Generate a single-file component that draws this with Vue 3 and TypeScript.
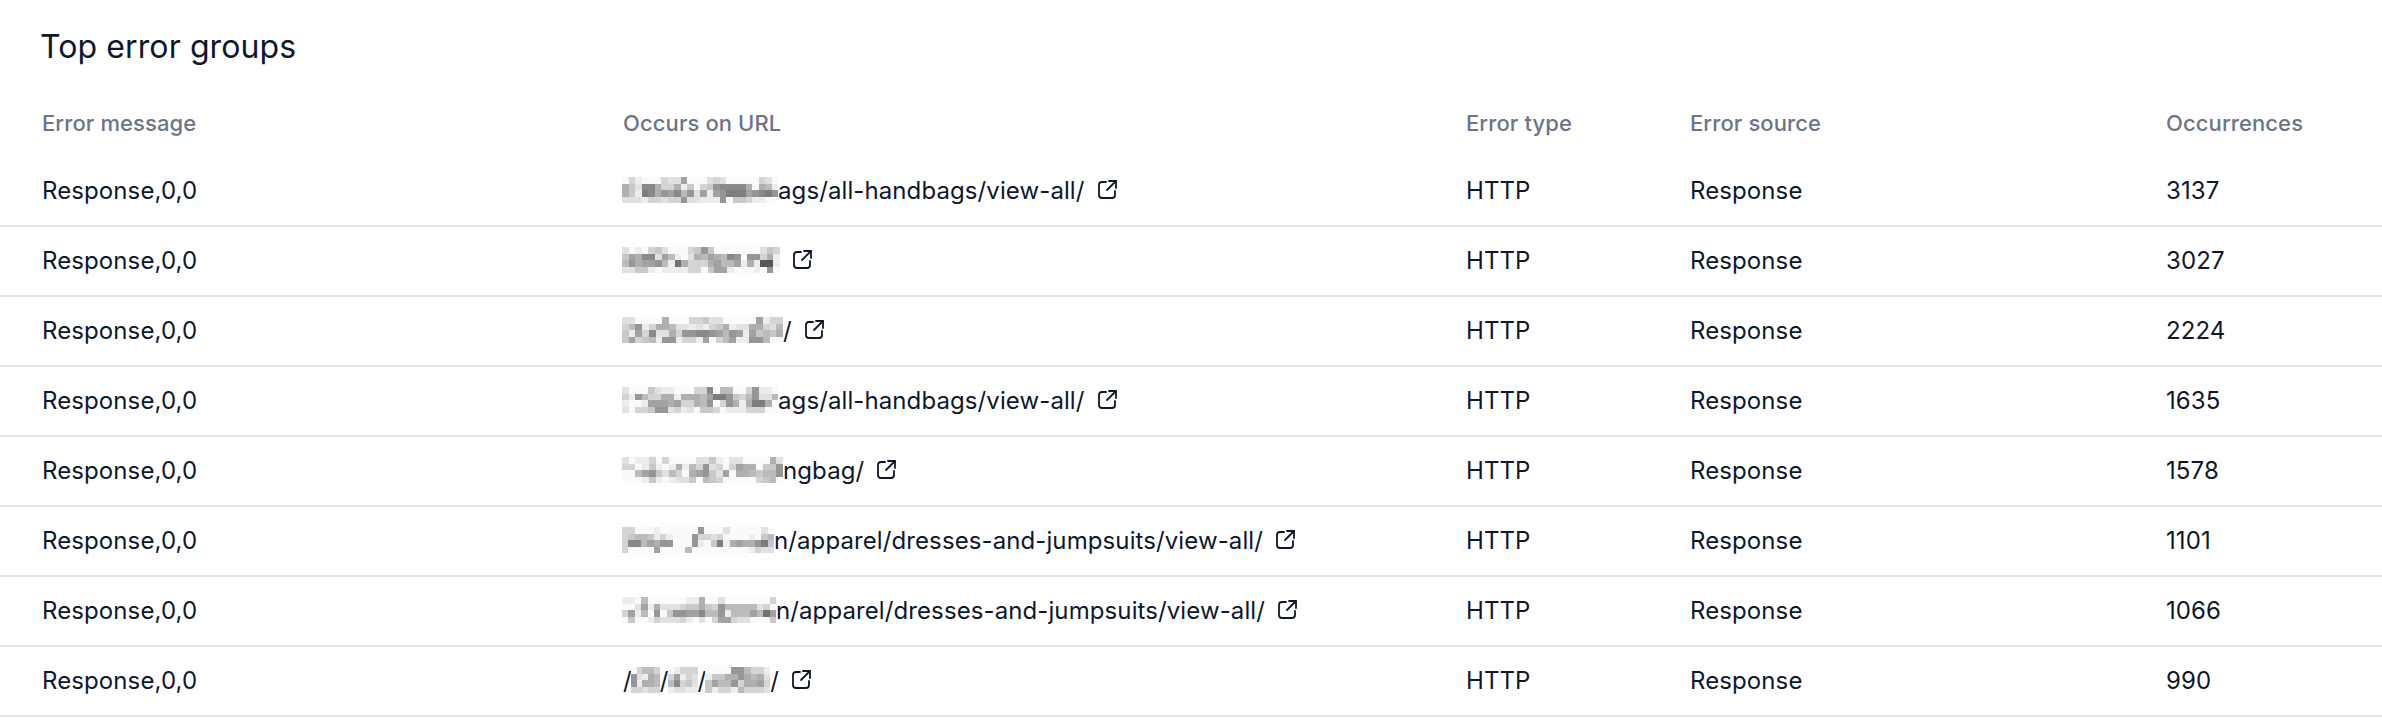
<script setup lang="ts">
interface Patch { w: number; cols: number; data: string }
interface Row { n: number; parts: (string | Patch)[] }

const rows: Row[] = [
  { n: 3137, parts: [{ w: 156, cols: 24, data: 'fcefffcdd8fffdcdfffffcdf' + '9bd669cc9ebfcb766669f9ae' + '9be569786a7d8e8755587657' + 'dddeccdcc7ddeee7fbbceeff' }, 'ags/all-handbags/view-all/'] },
  { n: 3027, parts: [{ w: 158, cols: 24, data: 'dfefcbdfffcb7bfffffffdbc' + 'b8966d8aefd9a89a67f77c9e' + 'a79887ae49ccc98aa8e9e22e' + 'ddbbefeeeeccfb88efffef7f' }] },
  { n: 2224, parts: [{ w: 161, cols: 24, data: 'ddffff9fffccbddfffff8ecc' + 'ca7ec99addedecb9edd99cda' + 'be8c6dd9c776678a78e8bab9' + 'b8cbae77ecce8fca8ee77aff' }, '/'] },
  { n: 1635, parts: [{ w: 156, cols: 24, data: 'dfffbdeefffcc6faaffc7eef' + 'ce7acc99e999a8557bca7dda' + 'effe88898cc9a7fc79e9559f' + 'dfccb77dcedfbbcfeeecccff' }, 'ags/all-handbags/view-all/'] },
  { n: 1578, parts: [{ w: 161, cols: 24, data: 'dfeecfcffffddbefddffff9d' + 'ccfebefe9eac7dcfc899fbb7' + 'ffa87bdacf987bd8f99abaa7' + 'fffebefeddbfabcfffffcbaf' }, 'ngbag/'] },
  { n: 1101, parts: [{ w: 152, cols: 24, data: 'ccfffeffffff7fffdfffffdf' + 'cbaabecefff7ccdcffffefba' + 'c66a8977fff7efb5e989975b' + 'cffff8ffffafffffffffecdd' }, 'n/apparel/dresses-and-jumpsuits/view-all/'] },
  { n: 1066, parts: [{ w: 154, cols: 24, data: 'eefaffffffee9ffdfffffffc' + 'ffd8e9dddcbb9bc7aaaaadcf' + 'c8eaf7fb77886aa7eaaa8a48' + 'fbffecdddcefdfc88cddfffb' }, 'n/apparel/dresses-and-jumpsuits/view-all/'] },
  { n: 990, parts: [
    '/',
    { w: 29, cols: 5, data: 'fcaac' + '7de9a' + '7e99a' + 'ccdcc' },
    '/',
    { w: 30, cols: 5, data: 'feccc' + 'c8ecd' + 'a6cbd' + 'eddee' },
    '/',
    { w: 65, cols: 10, data: 'ffff77acce' + 'ebb9979a9d' + 'b8aa7c998c' + 'becceacccd' },
    '/',
  ] },
]

function shade(d: string): string {
  const v = 62 + Math.round(parseInt(d, 16) * 12.5)
  return `rgb(${v},${v},${Math.min(255, v + 3)})`
}
</script>

<template>
  <section class="panel">
    <h2 class="title">Top error groups</h2>
    <div class="row head">
      <div>Error message</div>
      <div>Occurs on URL</div>
      <div>Error type</div>
      <div>Error source</div>
      <div>Occurrences</div>
    </div>
    <div v-for="r in rows" :key="r.n" class="row body">
      <div>Response,0,0</div>
      <div class="url">
        <template v-for="(p, i) in r.parts" :key="i">
          <span v-if="typeof p === 'string'">{{ p }}</span>
          <span v-else class="patch" :style="{ width: p.w + 'px', gridTemplateColumns: `repeat(${p.cols}, 1fr)` }">
            <i v-for="(c, j) in p.data.split('')" :key="j" :style="{ background: shade(c) }"></i>
          </span>
        </template>
        <svg class="ext" viewBox="0 0 24 24" fill="none" stroke="currentColor" stroke-width="1.8" stroke-linecap="round" stroke-linejoin="round">
          <path d="M11 4H7a3 3 0 0 0-3 3v10a3 3 0 0 0 3 3h10a3 3 0 0 0 3-3v-4" />
          <path d="M14 3h7v7" />
          <path d="M21 3l-9 9" />
        </svg>
      </div>
      <div>HTTP</div>
      <div>Response</div>
      <div>{{ r.n }}</div>
    </div>
  </section>
</template>

<style>
html, body { margin: 0; background: #fff; }
</style>

<style scoped>
.panel {
  font-family: Inter, "Liberation Sans", sans-serif;
  color: #0f172a;
  width: 2382px;
  height: 726px;
  overflow: hidden;
  box-sizing: border-box;
  padding-top: 25px;
}
.title {
  margin: 0 0 0 40px;
  font-size: 32px;
  line-height: 44px;
  font-weight: 400;
  letter-spacing: 0.1px;
}
.row {
  display: grid;
  grid-template-columns: 581px 843px 224px 476px 1fr;
  padding-left: 42px;
  align-items: center;
  box-sizing: border-box;
}
.head {
  margin-top: 31px;
  margin-bottom: 11px;
  height: 46px;
  font-size: 22px;
  font-weight: 500;
  letter-spacing: 0.1px;
  color: #6b7488;
}
.body {
  height: 70px;
  padding-bottom: 2px;
  font-size: 24px;
  letter-spacing: 0.1px;
  border-bottom: 2px solid #e2e8f0;
}
.url {
  display: flex;
  align-items: center;
}
.patch {
  display: grid;
  grid-auto-rows: 1fr;
  height: 26px;
  margin-left: -1px;
}
.ext {
  width: 24px;
  height: 24px;
  margin-left: 10px;
  flex: none;
}
</style>
